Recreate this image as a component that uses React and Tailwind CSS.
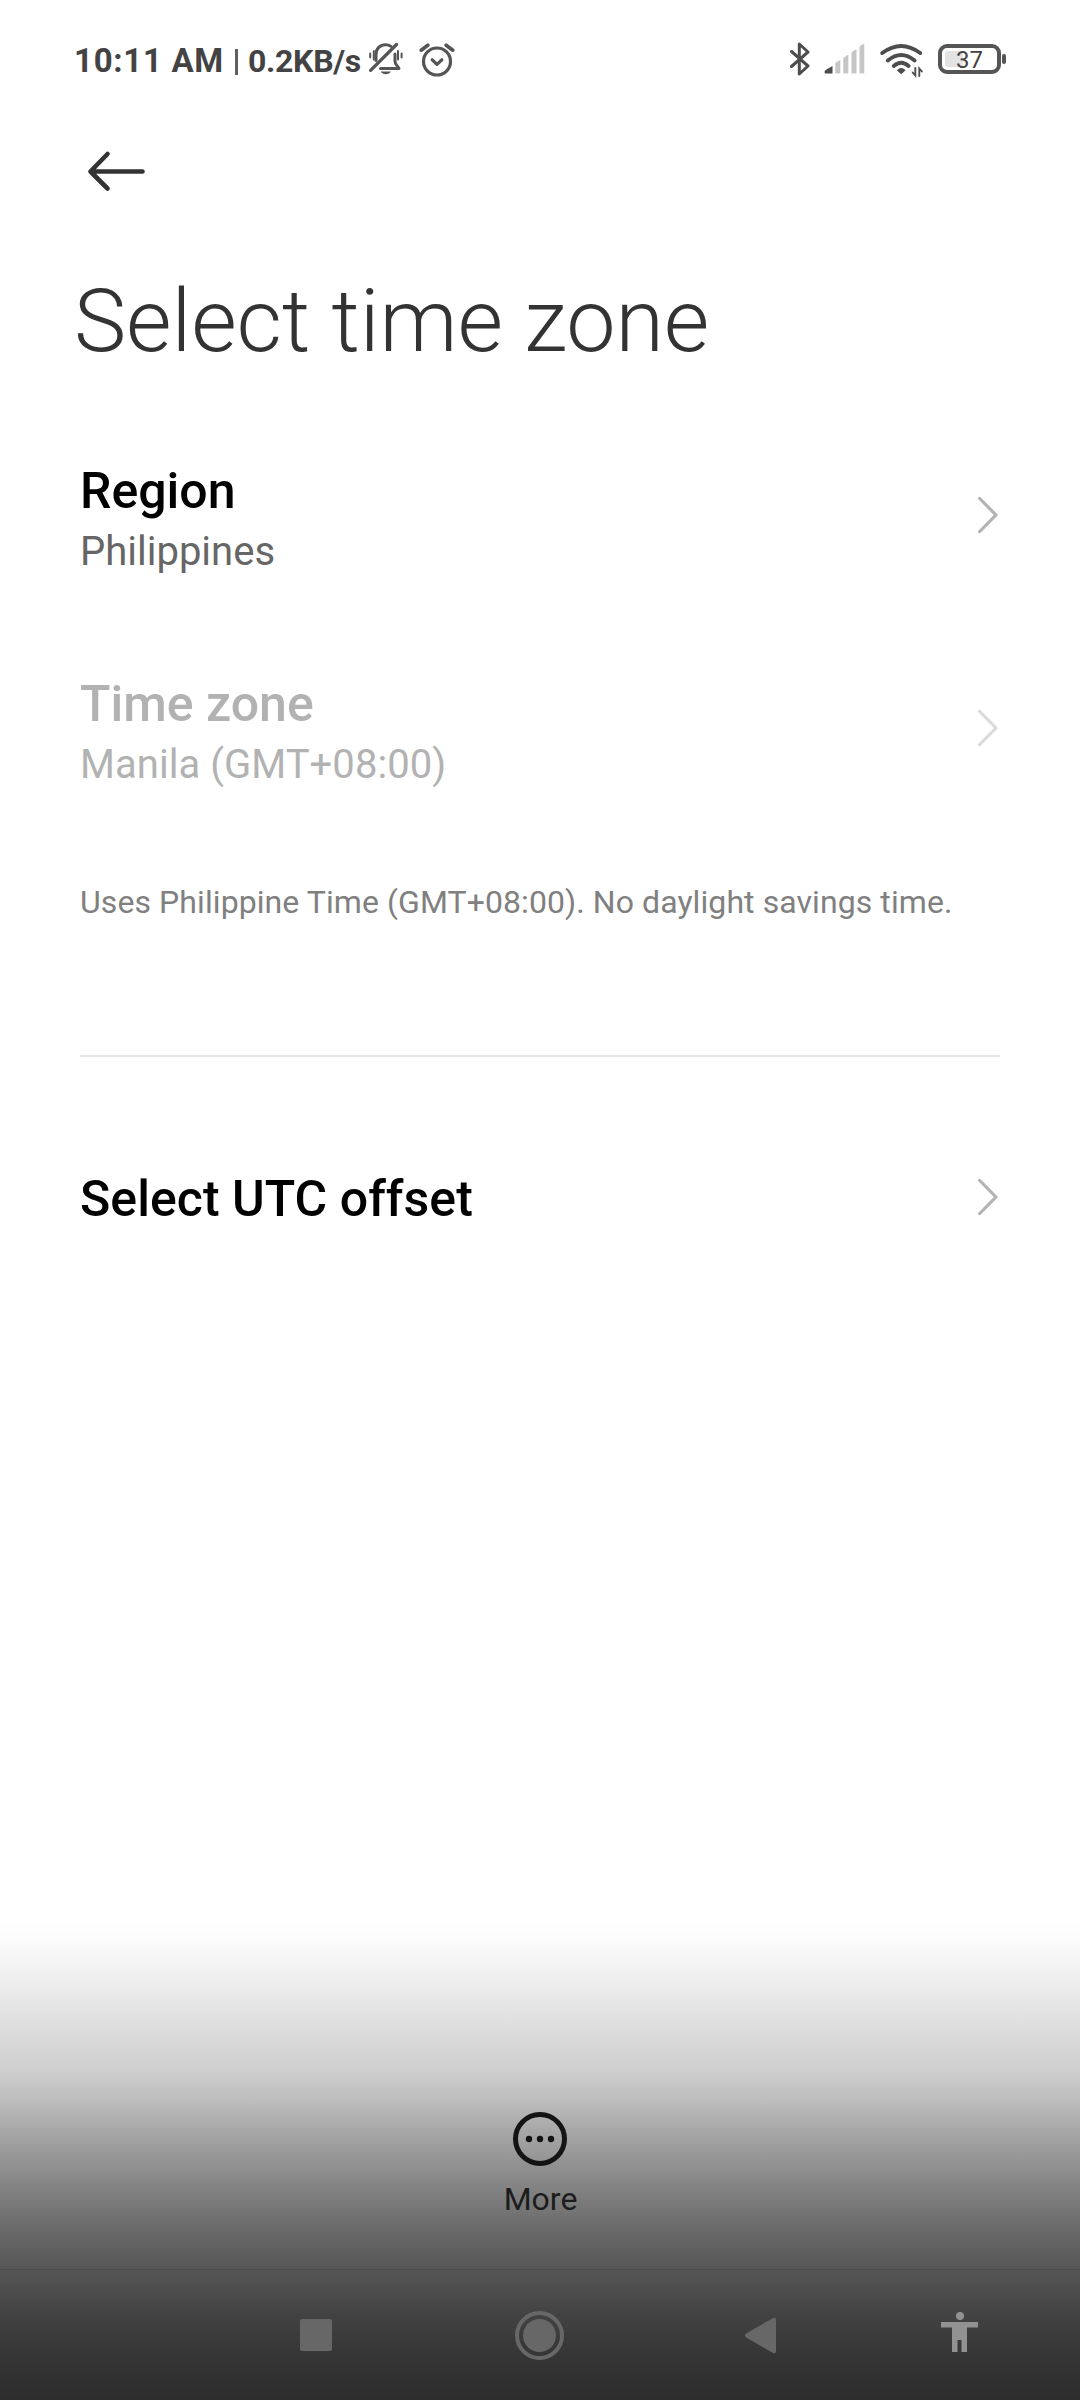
const settings = [
  { title: "Region", value: "Philippines" },
  { title: "Time zone", value: "Manila (GMT+08:00)", disabled: true },
];

function MutedBell() {
  return (
    <svg width="36" height="34" viewBox="0 0 36 34" fill="none" stroke="#555" strokeWidth="3" strokeLinecap="round" strokeLinejoin="round">
      <path d="M2.200 11.500v4M5.800 9v8.500M30 9v8.500M33.600 11.500v4" strokeWidth="2" />
      <path d="M8 18.500V12.500C8 6.500 12 2.700 17.500 2.700c2 0 4 .6 5.500 1.700M27 12v7c0 3.500 2.200 4.500 4 7.500H12.500" />
      <path d="M2.600 28.300L28.500 2.500" strokeWidth="3.300" />
      <path d="M12.800 29.500h10c-1 1.800-2.700 2.700-5 2.700s-4-.9-5-2.700z" fill="#555" stroke="none" />
    </svg>
  );
}

function AlarmIcon() {
  return (
    <svg width="36" height="34" viewBox="0 0 36 34" fill="none" stroke="#555" strokeWidth="3.200" strokeLinecap="round" strokeLinejoin="round">
      <circle cx="18" cy="18.500" r="13.500" />
      <path d="M13.200 16.800l4.800 4.600 4.800-4.600" />
      <path d="M2.200 7.200l6.600-5M33.800 7.200l-6.600-5" strokeWidth="3.600" />
    </svg>
  );
}

function BluetoothIcon() {
  return (
    <svg width="22" height="34" viewBox="0 0 22 34" fill="none" stroke="#4d4d4d" strokeWidth="3" strokeLinecap="round" strokeLinejoin="round">
      <path d="M2.500 9.500L19 24l-8.700 8V2L19 10 2.500 24.500" />
    </svg>
  );
}

function SignalIcon() {
  return (
    <svg width="41" height="30" viewBox="0 0 41 30" fill="#c6c6c6">
      <path d="M1.500 26L8.500 22v7.500H1.800c-1.500 0-1.800-2-.3-3.500z" fill="#4d4d4d" />
      <path d="M11.300 19l5-3.200v12.700q0 1-1 1h-3q-1 0-1-1z" />
      <path d="M19.300 14l5-3.400v17.900q0 1-1 1h-3q-1 0-1-1z" />
      <path d="M27.500 8.300l5-3.400v23.600q0 1-1 1h-3q-1 0-1-1z" />
      <path d="M35.500 3q.3-1 1.200-1.500l2.300-1.300q1.300-.4 1.300.8v27.500q0 1-1 1h-2.800q-1 0-1-1z" />
    </svg>
  );
}

function WifiIcon() {
  return (
    <svg className="overflow-visible" width="44" height="34" viewBox="0 0 44 34" fill="none" stroke="#4d4d4d" strokeWidth="3.900" strokeLinecap="round">
      <path d="M2.200 11Q21.200 -3.200 40.200 11" />
      <path d="M7.800 18.500Q21.200 7.300 34.600 18.500" />
      <path d="M13.800 24Q21.200 17.600 28.600 24" />
      <path d="M16.800 28.300q4.400-4.400 8.800 0L21.200 32.300z" fill="#4d4d4d" stroke="none" />
      <path d="M35.300 26v7.500l-2.600-3M39.300 34v-7.500l2.600 3" strokeWidth="1.900" />
    </svg>
  );
}

function Chevron({ disabled }) {
  return (
    <svg width="22" height="40" viewBox="0 0 22 40" fill="none" stroke={disabled ? "#dadada" : "#b3b3b3"} strokeWidth="3.200" strokeLinecap="round" strokeLinejoin="round">
      <path d="M1.700 3.500L18 20 1.700 36.500" />
    </svg>
  );
}

function StatusBar() {
  return (
    <header className="flex h-[120px] items-start justify-between px-[74px] text-[#434343]">
      <div className="flex items-center pt-[41px]">
        <span className="mt-[2px] w-[152px] whitespace-pre text-[33px] leading-[36px] font-bold tracking-[0.7px]">10:11 AM</span>
        <span className="mb-[-3px] ml-[9px] h-[26px] w-[3px] bg-[#606060]" />
        <span className="mt-px ml-[10px] w-[113px] whitespace-pre text-[32px] leading-[36px] font-bold tracking-[-0.3px]">0.2KB/s</span>
        <span className="-mt-[2px] ml-[7px]"><MutedBell /></span>
        <span className="ml-[15px]"><AlarmIcon /></span>
      </div>
      <div className="flex items-center pt-[42px]">
        <BluetoothIcon />
        <span className="ml-[13px]"><SignalIcon /></span>
        <span className="ml-[15px]"><WifiIcon /></span>
        <div className="ml-[14px] flex h-[30px] w-[63px] rounded-[9px] border-4 border-[#555] p-[3px]">
          <div className="h-full w-[18px] rounded-l-[3px] bg-[#e3e3e3]" />
          <span className="-ml-[7px] mt-[2px] self-center text-[24px] leading-none">37</span>
        </div>
        <span className="ml-[1px] h-[10px] w-[4px] rounded-full bg-[#555]" />
      </div>
    </header>
  );
}

function NavigationBar() {
  return (
    <nav className="h-[131px] border-t border-[#4b4b4b]">
      <svg width="1080" height="130" viewBox="0 0 1080 130" fill="#676767">
        <rect x="300" y="49" width="32" height="32" rx="2" />
        <circle cx="539.500" cy="65.500" r="22.500" fill="none" stroke="#676767" strokeWidth="4" />
        <circle cx="539.500" cy="65.500" r="16.500" />
        <path d="M746 63.500L773 48q3-1 3 1.500v32q0 2.500-3 1.500L746 67.500q-2-2 0-4z" />
        <g fill="#929292">
          <circle cx="960" cy="46" r="4" />
          <path d="M941 52h37v5.500h-11v24.500h-5.500V70h-4v12H952V57.500h-11z" />
        </g>
      </svg>
    </nav>
  );
}

export default function App() {
  return (
    <div className="flex h-[2400px] w-[1080px] flex-col bg-[linear-gradient(#fff_1915px,#fcfcfc_1937px,#efefef_1978px,#dedede_2025px,#cfcfcf_2070px,#bfbfbf_2097px,#a8a8a8_2130px,#909090_2167px,#7b7b7b_2200px,#646464_2240px,#555_2272px,#434343_2313px,#383838_2347px,#303030_2380px,#2d2d2d_2400px)] font-[Roboto,sans-serif]">
      <StatusBar />

      <div className="pl-[86px] pt-[30px]">
        <svg width="62" height="42" viewBox="0 0 62 42" fill="none" stroke="#333" strokeWidth="4.600" strokeLinecap="round" strokeLinejoin="round">
          <path d="M21.500 4L4.500 21.500l17 17M4.500 21.500h52" />
        </svg>
      </div>

      <h1 className="mt-[77px] pl-[74px] text-[88px] leading-[104px] font-light tracking-[-0.08px] text-[#333]">Select time zone</h1>

      <main className="flex-1 px-20 pt-[88px]">
        {settings.map(({ title, value, disabled }) => (
          <div key={title} className="flex h-[213px] items-start justify-between">
            <div>
              <h2 className={`text-[50px] leading-[60px] font-medium ${disabled ? "text-[#b2b2b2]" : "text-black"}`}>{title}</h2>
              <p className={`mt-px text-[40px] leading-[60px] ${disabled ? "tracking-[0.05px] text-[#b2b2b2]" : "text-[#666]"}`}>{value}</p>
            </div>
            <span className="mt-[34px]"><Chevron disabled={disabled} /></span>
          </div>
        ))}

        <p className="text-[32px] leading-[30px] tracking-[0.08px] text-[#808080]">Uses Philippine Time (GMT+08:00). No daylight savings time.</p>
        <hr className="mt-[138px] border-t-2 border-[#e5e5e5]" />

        <div className="mt-[111px] flex items-start justify-between">
          <h2 className="mt-px text-[50px] leading-[60px] font-medium tracking-[0.04px] text-black">Select UTC offset</h2>
          <span className="mt-[9px]"><Chevron /></span>
        </div>
      </main>

      <footer className="flex h-[158px] flex-col items-center">
        <svg width="56" height="56" viewBox="0 0 56 56" fill="#141414">
          <circle cx="28" cy="28" r="24.500" fill="none" stroke="#141414" strokeWidth="5" />
          <circle cx="17" cy="28" r="3.200" />
          <circle cx="28" cy="28" r="3.200" />
          <circle cx="39" cy="28" r="3.200" />
        </svg>
        <span className="mt-[12px] pl-px text-[32px] leading-[40px] text-[#1c1c1c]">More</span>
      </footer>
      <NavigationBar />
    </div>
  );
}
